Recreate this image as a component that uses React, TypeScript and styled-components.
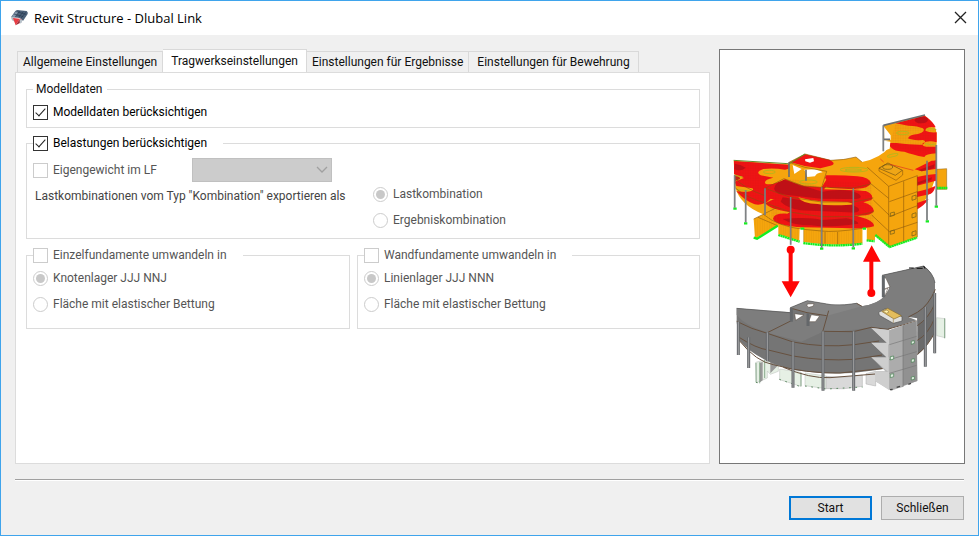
import React from "react";
import styled, { createGlobalStyle, css } from "styled-components";

const GlobalStyle = createGlobalStyle`
  *, *::before, *::after { box-sizing: border-box; }
  body {
    margin: 0;
    background: #fff;
    color: #111;
    font-family: Roboto, "Liberation Sans", Arial, sans-serif;
    font-size: 12px;
    line-height: 16px;
  }
  button, input, select { font: inherit; color: inherit; margin: 0; }
`;

const Dialog = styled.div`
  display: flex;
  flex-direction: column;
  min-height: calc(100vh - 14px);
  border: 1px solid #3fa4ec;
  background: #f0f0f0;
`;

const TitleBar = styled.header`
  display: flex;
  align-items: center;
  gap: 5px;
  height: 34px;
  padding: 0 9px;
  background: #fff;
`;

const Title = styled.h1`
  flex: 1;
  margin: 0;
  color: #000;
  font: 400 13px/18px "Open Sans", "Noto Sans", sans-serif;
`;

const CloseButton = styled.button`
  display: flex;
  padding: 0 2px 2px;
  border: 0;
  background: none;
`;

const Body = styled.main`
  flex: 1;
  display: flex;
  gap: 9px;
  padding: 14px 13px 15px 14px;
`;

const Settings = styled.section`
  flex: 1;
  min-width: 0;
  display: flex;
  flex-direction: column;
`;

const TabList = styled.div`
  display: flex;
  align-items: flex-end;
  height: 23px;
  padding-left: 2px;
`;

const Tab = styled.button<{ $active?: boolean }>`
  height: 21px;
  padding: 0 5px;
  border: 1px solid #d9d9d9;
  border-bottom: 0;
  background: #f0f0f0;
  white-space: nowrap;
  & + & { border-left: 0; }
  &:last-child { padding: 0 8px; }
  ${(p) =>
    p.$active &&
    css`
      height: 24px;
      padding: 0 8px 2px;
      margin-bottom: -1px;
      background: #fff;
    `}
`;

const TabPanel = styled.div`
  flex: 1;
  display: flex;
  flex-direction: column;
  gap: 7px;
  padding: 8px 9px 8px 10px;
  border: 1px solid #dcdcdc;
  background: #fff;
`;

const Group = styled.fieldset`
  min-width: 0;
  margin: 0;
  padding: 0 6px 7px;
  border: 1px solid #dcdcdc;
`;

const Legend = styled.legend<{ $text?: boolean }>`
  padding: ${(p) => (p.$text ? "0 4px 0 3px" : "0 16px 0 0")};
`;

const Choice = styled.label<{ $disabled?: boolean }>`
  display: flex;
  align-items: center;
  gap: 5px;
  white-space: nowrap;
  color: ${(p) => (p.$disabled ? "#555" : "#000")};
`;

const CheckBox = styled.input`
  appearance: none;
  flex: none;
  display: flex;
  justify-content: center;
  width: 15px;
  height: 15px;
  border: 1px solid #333;
  background: #fff;
  &:disabled { border-color: #ccc; }
  &:checked::after {
    content: "";
    width: 5px;
    height: 10px;
    border: solid #222;
    border-width: 0 1px 1px 0;
    transform: rotate(42deg);
  }
`;

const RadioButton = styled.input`
  appearance: none;
  flex: none;
  display: grid;
  place-items: center;
  width: 15px;
  height: 15px;
  border: 1px solid #ccc;
  border-radius: 50%;
  background: #fff;
  &:checked::after {
    content: "";
    width: 9px;
    height: 9px;
    border-radius: 50%;
    background: #c8c8c8;
  }
`;

const Row = styled.div`
  display: flex;
  align-items: center;
  padding-top: 7px;
`;

const SelfWeight = styled.div`
  display: grid;
  grid-template-columns: 159px 140px;
  align-items: center;
  padding-top: 7px;
`;

const SelectWrap = styled.div`
  display: grid;
  align-items: center;
  & > * { grid-area: 1 / 1; }
  & > svg { justify-self: end; margin-right: 4px; pointer-events: none; }
`;

const Select = styled.select`
  appearance: none;
  width: 100%;
  height: 24px;
  border: 1px solid #c0c0c0;
  border-radius: 0;
  background: #ccc;
  &:disabled { opacity: 1; }
`;

const Export = styled.div`
  display: flex;
  gap: 16px;
  padding: 4px 0 3px 2px;
`;

const ExportLabel = styled.span`
  width: 322px;
  padding-top: 2px;
  color: #444;
`;

const RadioStack = styled.div`
  display: flex;
  flex-direction: column;
  gap: 10px;
`;

const FoundationRow = styled.div`
  display: grid;
  grid-template-columns: 17fr 18fr;
  gap: 7px;
  padding-top: 1px;
  & ${Group} { padding-bottom: 16px; }
  & ${RadioStack} { padding-top: 7px; }
`;

const Preview = styled.aside`
  width: 246px;
  border: 1px solid #777;
  background: #fff;
  & > svg { display: block; width: 100%; }
`;

const Footer = styled.footer`
  display: flex;
  justify-content: flex-end;
  gap: 9px;
  margin: 0 14px;
  padding: 16px 0 15px;
  border-top: 1px solid #a0a0a0;
  box-shadow: inset 0 1px #fff;
`;

const PushButton = styled.button<{ $primary?: boolean }>`
  width: 83px;
  height: 24px;
  padding: 0;
  border: ${(p) => (p.$primary ? "2px solid #0078d7" : "1px solid #adadad")};
  background: #e1e1e1;
`;

const AppIcon = () => (
  <svg width="19" height="18" viewBox="0 0 57 54" aria-hidden="true">
    <path d="M3 25 16 6q5-4 12-2l22 2q5 4 3 9L39 36q-5-9-13-10z" fill="#4c6078" />
    <path d="m5 23 13-16 9 3-12 14z" fill="#8799ad" />
    <path d="m26 25 14-17M33 28 47 10M16 23 29 6M12 15l28 8M19 8l29 8" stroke="#26384e" strokeWidth="2" fill="none" />
    <path d="m3 25 10 2 3 12-10-5z" fill="#b4bac0" />
    <path d="m9 27 21 2-13 20z" fill="#e83c43" />
    <path d="m17 49 13-20 5 1-4 11z" fill="#a12a35" />
    <path d="m29 29 8 5-2 7-6 3z" fill="#b9c2ca" />
  </svg>
);

const CloseIcon = () => (
  <svg width="13" height="13" viewBox="0 0 13 13" aria-hidden="true">
    <path d="m1 1 11 11M12 1 1 12" stroke="#222" strokeWidth="1.3" />
  </svg>
);

const Chevron = () => (
  <svg width="12" height="8" viewBox="0 0 12 8" aria-hidden="true">
    <path d="m1 1 5 5 5-5" fill="none" stroke="#a0a0a0" strokeWidth="1.3" />
  </svg>
);

const StressModel = () => (
  <g transform="translate(0 150)">
    <defs>
      <pattern id="mesh" width="5" height="5" patternUnits="userSpaceOnUse">
        <path d="M0 0h5M0 0v5" stroke="#a31212" strokeWidth="1" opacity=".55" />
      </pattern>
      <pattern id="ribs" width="7" height="8" patternUnits="userSpaceOnUse">
        <path d="M0 0v8" stroke="#b37408" strokeWidth="1.2" />
      </pattern>
    </defs>
    {/* storeys, curved front and rear wing */}
    <path d="M41 182 205 193 207 187 255 162 332 181Q370 181 408 171L426 186Q482 174 509 140L490 118V76L613 45Q646 72 650 100V190Q650 270 592 328V412L508 441 465 407V420L440 422V385H428V430Q338 440 250 426V388L240 385 238 422 175 403V376L105 416 101 357 130 343Q60 316 46 262Z" fill="#f5a50d" />
    <path d="M650 208 680 206V268H650Z" fill="#f5a50d" stroke="#8e6110" strokeWidth="1.5" />
    {/* stress zones */}
    <g fill="#f01414">
      <path d="M42 183 205 194Q214 207 195 209 160 203 130 207 104 216 122 226L160 233Q126 241 138 252 165 256 192 236L240 258 200 310 152 296Q132 318 104 313 75 303 49 274L77 276Q107 272 97 265L49 258 44 245 72 234 42 222Z" />
      <path d="M138 265 192 236 240 258 305 262 318 226Q360 224 412 229 449 232 453 249 446 267 405 266L440 274Q465 286 454 300L430 307Q459 315 462 333 450 351 402 345L440 357Q463 367 462 379 430 388 367 384L250 382Q169 378 159 357 161 339 202 341L210 336Q145 327 136 309 154 300 172 295 137 286 138 265Z" />
      <path d="m212 187 43-24 73 16q24 12 3 18l-30 8-47-7Z" />
      <path d="m527 70 87-23q26 18 33 35-30-4-31 10 13 7 34 5v30q-26-7-42 3-3 10 11 10h30v20q-32 2-36 11-36-7-60-16-41 0-47-26h24q46 6 78 5 14-10 1-14-33 2-45-5 5-12 30-13 25-7 15-17-15-7-44-8Z" />
      <path d="M635 182q9 1 14-2v26l-44 8-21-6ZM591 231q31-7 57-9v20l-57 15ZM591 275q40-9 55-17-3 18-15 24l-40 9ZM591 309l35-12q-12 18-34 31Z" />
    </g>
    <path d="M42 183 205 194Q214 207 195 209 160 203 130 207 104 216 122 226L160 233Q126 241 135 262L130 300Q138 318 104 313 75 303 49 274L77 276Q107 272 97 265L49 258 44 245 72 234 42 222ZM138 265 192 236 453 249 462 379 250 382 159 357ZM527 70 614 47 648 85 648 165 508 140Z" fill="url(#mesh)" opacity=".55" />
    <g fill="#b70f16" opacity=".85">
      <path d="M44 191q17 2 33 12-13 12-34 5ZM43 224q18 4 17 13l-16 7ZM583 60q16-15 39-7 7 15-17 17-17 1-22-10ZM170 251q12-15 32-9l105 33q74-12 110 7 19 17-29 15l-85-1-125-14q-26-12-8-31ZM188 292q80 12 118 20 79-7 108 11 14 17-32 14l-140-6q-42-8-60-26ZM188 357q76-7 117 3l75-5q39 9 34 16-95 13-140 5-57 0-86-19ZM596 210l48-17-3 12-36 9ZM593 247l43-15-2 8-41 14Z" />
    </g>
    <path d="M235 292q35 10 68 12l80 2q25 6 8 8-70 4-98-2-46 0-58-20M212 233l93 29 14-23-20-31-95 25ZM145 241q28-15 60-9-20 14-46 18-14 0-14-9ZM318 260 332 264 440 270 446 274 400 270 312 268Z" fill="#f5a50d" />
    {/* pale contour spots */}
    <g fill="none" stroke="#b8b51b" strokeWidth="3">
      <ellipse cx="148" cy="216" rx="18" ry="5" />
      <ellipse cx="402" cy="209" rx="42" ry="7" />
      <ellipse cx="400" cy="210" rx="25" ry="3" />
      <ellipse cx="265" cy="246" rx="27" ry="6" />
      <ellipse cx="548" cy="99" rx="19" ry="5" />
      <ellipse cx="518" cy="166" rx="16" ry="4" transform="rotate(-14 518 166)" />
      <path d="M620 87q16-2 29 2M615 131q18 6 32 1M52 269l37 3M43 226l25 5" />
    </g>
    {/* openings */}
    <path d="m218 195 27 12-22 15ZM253 209l31-1q18 4 24 9-19 2-23 12l-23 2-5-12ZM255 178l25-4 2 10-12 4-14-4ZM492 80l20 26V119l-19 4ZM493 122l18 3-2 21-17 6Z" fill="#fff" />
    {/* floor edges */}
    <g fill="none" stroke="#84530d" strokeWidth="1.7">
      <path d="M46 235Q70 264 135 287M46 264Q80 294 136 309L210 336 305 350 400 350 462 335M135 265 212 292 305 306 400 306 460 294M135 265 192 236 250 258 305 262 400 264 452 252M305 262 320 214 255 202 207 187 255 162 332 181Q370 181 408 171L426 186M101 357 170 323M114 352 175 378M305 393Q340 398 428 385M130 343Q175 380 250 388L305 393M250 388V426M315 396V431M353 396V432M400 389V430" />
      <path d="m442 202 64 57V441M506 259 592 227M508 305 592 275M508 350 592 317M508 395 592 367M551 244V426M592 227V412M460 300 508 346M455 345 508 395M445 245 506 295M477 204V213L528 241 548 225V212L503 190Z" />
    </g>
    <path d="m477 205 27-16 43 22-21 15Z" fill="#efa617" stroke="#735315" strokeWidth="2" />
    <ellipse cx="503" cy="201" rx="15" ry="7" fill="none" stroke="#695817" strokeWidth="2" />
    <path d="m481 177 10 9M510 193l70 18" stroke="#e0301e" strokeWidth="2" />
    <path d="M177 375V403L238 422V386ZM250 389V425Q340 440 427 429V390Q340 401 250 389ZM103 355 172 328V374L106 413Z" fill="url(#ribs)" opacity=".55" />
    <path d="M239 386h11v42h-11ZM428 387h11v42h-11Z" fill="#fff" />
    <path d="m41 181 163 10M205 193l50-31" stroke="#638b2b" strokeWidth="3" />
    <g fill="none" stroke="#6b5a18" strokeWidth="2">
      <path d="m576 289 12-4v12l-12 4ZM576 342l12-4v12l-12 4ZM576 396l12-4v12l-12 4ZM511 339l12-3v10l-12 3ZM511 393l12-3v10l-12 3Z" />
    </g>
    {/* supports */}
    <g stroke="#14ee20" strokeWidth="7" fill="none">
      <path d="m101 413 10 3 62-39" />
      <path d="m175 405 64 20M250 429Q340 442 427 431M440 421l24 3M466 405l43 36 82-28M650 264h32" strokeDasharray="6 1" />
      <path d="M40 326h10M72 370h10M300 446h10M395 445h10M617 364h10M644 320h10M241 386h12M428 386h10" />
    </g>
    {/* columns */}
    <g stroke="#6c6f72" strokeWidth="5" fill="none">
      <path d="M44 226V323M77 271V367M135 265V345M212 291V434M305 262V443M400 265V442M207 187V231M258 209V242M490 76V154M490 118h20M649 135V317M621 182V361M490 76 615 45" />
    </g>
    <g stroke="#b3b5b7" strokeWidth="1" fill="none">
      <path d="M44 226V323M77 271V367M135 265V345M212 291V434M305 262V443M400 265V442M490 76V154M649 135V317M621 182V361" />
    </g>
  </g>
);

const StructuralModel = () => (
  <g transform="translate(0 555)">
    {/* rear wing and entrance walls */}
    <path d="m650 248 25 3v57l-25-6ZM107 382l35-9 33 16v20l-24 9-9-10v21l-32 14ZM179 402l64 10v42l-64-20ZM255 414l64 9v38l-64-9Z" fill="#e6f0e5" stroke="#b8bdb8" strokeWidth="1.5" />
    <path d="m120 383 8-2v55l-8 6ZM151 379l25 10-25 26Z" fill="#999" />
    <path d="M318 424Q380 430 427 420V454Q370 465 318 461ZM438 416l29-7v44l-29-6Z" fill="#d9d9d9" stroke="#aaa" strokeWidth="1.5" />
    <g stroke="#5c8a62" strokeWidth="3" fill="none">
      <path d="M108 442l13 3M178 433l64 22M255 453l64 9 109-6" strokeDasharray="5 14" />
      <path d="M674 250v60M108 384v58M119 382v63M134 374v55M243 413v41" strokeWidth="2" />
    </g>
    {/* storeys */}
    <path d="M592 250 645 200V290Q625 332 592 361Z" fill="#6b6b6b" />
    <path d="M50 220 211 234V218L262 197 333 209Q375 212 410 205L425 214Q474 207 494 183L508 161 486 121 611 93Q640 112 645 145V205Q642 229 592 274L592 250 565 246 505 285V400L465 406Q350 425 225 406 115 381 57 316L50 262Z" fill="#757575" />
    <path d="M50 220 211 232 214 252 236 249 250 259 142 292Q75 272 50 240ZM142 293 225 250 264 232 306 241 326 226 425 214Q475 207 496 181L511 154 487 121 611 93Q640 112 645 145V165Q625 218 565 246L590 256 508 281 454 277Q350 295 306 286L309 290 244 320Z" fill="#7d7d7d" />
    <path d="m211 218 51-21 71 12q42 3 77-4l15 9-103 28-66-9-45-14Z" fill="#858585" />
    <path d="m224 236 28 4-25 16ZM274 239l25 4-13 17h-20ZM262 207l20-1-3 8-13 3-5-5ZM490 126l8 4 12 26-18 6ZM489 166l15-7-10 25Z" fill="#fff" stroke="#57483d" strokeWidth="1.5" />
    <g stroke="#67513f" strokeWidth="3" fill="none">
      <path d="M50 259Q95 283 142 295L219 321Q310 339 403 329L477 318M54 305Q110 341 145 345L219 363Q310 379 403 373L486 360M57 316Q110 381 160 389 260 416 360 414L491 400M190 397Q270 431 330 428L466 417M142 293 214 257M306 289 400 290 454 277 502 283 590 258M565 246l27-14Q626 211 646 163M592 272Q626 250 645 205M592 316Q625 298 645 247M592 358Q626 332 645 290M211 219l50 14 59 9M426 214 410 205M309 287 326 227" />
    </g>
    <path d="m50 220 161 13M211 218l51-21 71 12q42 3 77-4M486 121l125-28q31 25 34 51" stroke="#555" strokeWidth="2" fill="none" />
    <path d="M567 99h14M590 100h18M611 93l4 8" stroke="#111" strokeWidth="3" />
    {/* columns */}
    <g stroke="#64676a" strokeWidth="9" fill="none">
      <path d="M55 260V360M86 307V399M142 292V379M219 320V458M309 289V467M401 289V467M214 219V260M264 235V273M490 122V187M644 174V355M616 216V395" />
    </g>
    <g stroke="#a0a2a3" strokeWidth="3" fill="none">
      <path d="M55 260V360M86 307V399M142 292V379M219 320V458M309 289V467M401 289V467M644 174V355M616 216V395" />
    </g>
    {/* stair tower */}
    <path d="M454 279 508 286 590 258 592 438 514 467 465 438V408L496 409 454 367 508 374 454 323 505 328Z" fill="#b9b9b9" />
    <path d="m508 286 41-15V456l-41 8Z" fill="#acacac" />
    <path d="m549 271 41-13 2 180-43 14Z" fill="#919191" />
    <path d="m454 279 53 6v44ZM454 323h50v48ZM454 367h52v45ZM465 408l42 3v54l-42-27Z" fill="#cecece" />
    <path d="m508 329 82-25M508 374l82-24M508 415l82-24M549 271V456" stroke="#777" strokeWidth="2" />
    <path d="M510 464l8-1M530 457l10-3M565 448l8-3" stroke="#444" strokeWidth="4" />
    <g fill="#e2efe3" stroke="#417c4c" strokeWidth="2">
      <path d="m511 365 10-2v9l-10 3ZM511 418l10-2v9l-10 3ZM574 319l9-2v8l-9 3ZM574 373l9-2v9l-9 2ZM574 426l9-2v9l-9 2Z" />
    </g>
    <path d="m476 232 20-11 50 24v13l-26 7-42-24Z" fill="#e0e0dd" stroke="#555" strokeWidth="2" />
    <path d="m485 229 18-9 41 22-22 10Z" fill="#e3bd5c" stroke="#8a6d2b" strokeWidth="2" />
    <path d="m489 228 12-3 6 6-8 4ZM520 252v12" fill="#fff1a8" stroke="#9b8451" strokeWidth="2" />
  </g>
);

const Arrows = () => (
  <g transform="translate(0 555)" fill="#ff0505">
    <circle cx="212" cy="44" r="12" />
    <path d="M206 44h12v95h21l-27 48-27-48h21Z" />
    <circle cx="454" cy="174" r="12" />
    <path d="M448 174h12V80h22L455 31 429 80h19Z" />
  </g>
);

const Radio = ({ name, label, checked }: { name: string; label: string; checked?: boolean }) => (
  <Choice $disabled>
    <RadioButton type="radio" name={name} defaultChecked={checked} disabled />
    {label}
  </Choice>
);

const Check = ({ label, checked, disabled }: { label: string; checked?: boolean; disabled?: boolean }) => (
  <Choice $disabled={disabled}>
    <CheckBox type="checkbox" defaultChecked={checked} disabled={disabled} />
    {label}
  </Choice>
);

const tabs = [
  "Allgemeine Einstellungen",
  "Tragwerkseinstellungen",
  "Einstellungen für Ergebnisse",
  "Einstellungen für Bewehrung",
];

export default function App() {
  return (
    <>
      <GlobalStyle />
      <Dialog role="dialog" aria-labelledby="dialog-title">
        <TitleBar>
          <AppIcon />
          <Title id="dialog-title">Revit Structure - Dlubal Link</Title>
          <CloseButton type="button" aria-label="Schließen">
            <CloseIcon />
          </CloseButton>
        </TitleBar>
        <Body>
          <Settings>
            <TabList role="tablist">
              {tabs.map((tab, i) => (
                <Tab key={tab} type="button" role="tab" aria-selected={i === 1} $active={i === 1}>
                  {tab}
                </Tab>
              ))}
            </TabList>
            <TabPanel role="tabpanel">
              <Group>
                <Legend $text>Modelldaten</Legend>
                <Row>
                  <Check label="Modelldaten berücksichtigen" checked />
                </Row>
              </Group>
              <Group>
                <Legend>
                  <Check label="Belastungen berücksichtigen" checked />
                </Legend>
                <SelfWeight>
                  <Check label="Eigengewicht im LF" disabled />
                  <SelectWrap>
                    <Select aria-label="Lastfall" disabled />
                    <Chevron />
                  </SelectWrap>
                </SelfWeight>
                <Export>
                  <ExportLabel>Lastkombinationen vom Typ "Kombination" exportieren als</ExportLabel>
                  <RadioStack>
                    <Radio name="export" label="Lastkombination" checked />
                    <Radio name="export" label="Ergebniskombination" />
                  </RadioStack>
                </Export>
              </Group>
              <FoundationRow>
                <Group>
                  <Legend>
                    <Check label="Einzelfundamente umwandeln in" disabled />
                  </Legend>
                  <RadioStack>
                    <Radio name="single" label="Knotenlager JJJ NNJ" checked />
                    <Radio name="single" label="Fläche mit elastischer Bettung" />
                  </RadioStack>
                </Group>
                <Group>
                  <Legend>
                    <Check label="Wandfundamente umwandeln in" disabled />
                  </Legend>
                  <RadioStack>
                    <Radio name="wall" label="Linienlager JJJ NNN" checked />
                    <Radio name="wall" label="Fläche mit elastischer Bettung" />
                  </RadioStack>
                </Group>
              </FoundationRow>
            </TabPanel>
          </Settings>
          <Preview>
            <svg viewBox="0 0 732 1239" role="img" aria-label="Datenaustausch zwischen Berechnungsmodell und Gebäudemodell">
              <StressModel />
              <StructuralModel />
              <Arrows />
            </svg>
          </Preview>
        </Body>
        <Footer>
          <PushButton type="button" $primary>Start</PushButton>
          <PushButton type="button">Schließen</PushButton>
        </Footer>
      </Dialog>
    </>
  );
}
